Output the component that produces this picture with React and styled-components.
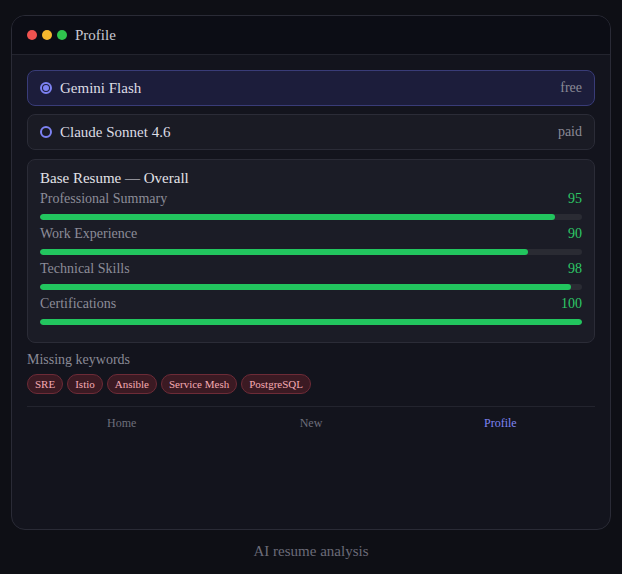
import React from 'react';
import styled, { createGlobalStyle } from 'styled-components';

const GlobalStyle = createGlobalStyle`
  html, body {
    margin: 0;
    padding: 0;
    background: #0e0f15;
    font-family: "Liberation Serif", "Times New Roman", serif;
  }
`;

const Page = styled.div`
  box-sizing: border-box;
  min-height: 100vh;
  display: flex;
  flex-direction: column;
  align-items: center;
  padding: 15px 11px 14px;
  gap: 12px;
`;

const Window = styled.div`
  box-sizing: border-box;
  width: 600px;
  flex: 1;
  display: flex;
  flex-direction: column;
  background: #13141d;
  border: 1px solid #2a2b36;
  border-radius: 14px;
  overflow: hidden;
`;

const TitleBar = styled.div`
  display: flex;
  align-items: center;
  gap: 5px;
  height: 38px;
  padding: 0 15px;
  background: #0c0d15;
  border-bottom: 1px solid #23242e;
`;

const Dot = styled.span`
  width: 10px;
  height: 10px;
  border-radius: 50%;
  background: ${p => p.color};
`;

const WindowTitle = styled.span`
  margin-left: 3px;
  font-size: 15px;
  color: #c9c9d2;
`;

const Body = styled.div`
  display: flex;
  flex-direction: column;
  padding: 15px 15px 0;
  gap: 8px;
`;

const Option = styled.div`
  box-sizing: border-box;
  height: 36px;
  display: flex;
  align-items: center;
  gap: 8px;
  padding: 0 12px;
  border-radius: 8px;
  background: ${p => (p.active ? '#1c1d3b' : '#1a1b24')};
  border: 1px solid ${p => (p.active ? '#393c78' : '#2b2c37')};
`;

const Radio = styled.span`
  box-sizing: border-box;
  width: 12px;
  height: 12px;
  border-radius: 50%;
  border: 2px solid #7d82f2;
  display: flex;
  align-items: center;
  justify-content: center;
  &::after {
    content: '';
    width: 6px;
    height: 6px;
    border-radius: 50%;
    background: ${p => (p.checked ? '#7d82f2' : 'transparent')};
  }
`;

const OptionName = styled.span`
  flex: 1;
  font-size: 15px;
  color: #dcdce4;
`;

const Tier = styled.span`
  font-size: 14px;
  color: #8a8a96;
`;

const ScoreCard = styled.div`
  box-sizing: border-box;
  padding: 9px 12px 17px;
  border-radius: 8px;
  background: #1b1c26;
  border: 1px solid #2b2c37;
  margin-top: 1px;
`;

const ScoreTitle = styled.div`
  font-size: 15px;
  color: #e2e2e8;
  line-height: 18px;
`;

const Row = styled.div`
  margin-top: ${p => (p.first ? '3px' : '5px')};
`;

const RowHead = styled.div`
  display: flex;
  justify-content: space-between;
  font-size: 14px;
  line-height: 18px;
  margin-bottom: 6px;
`;

const Label = styled.span`
  color: #8c8c98;
`;

const Value = styled.span`
  color: #2ec866;
`;

const Track = styled.div`
  height: 6px;
  border-radius: 3px;
  background: #2a2b33;
  overflow: hidden;
`;

const Fill = styled.div`
  height: 100%;
  border-radius: 3px;
  background: #22c55e;
`;

const Section = styled.div`
  font-size: 14px;
  color: #8a8a96;
  margin-top: 1px;
`;

const Tags = styled.div`
  display: flex;
  flex-wrap: wrap;
  gap: 4px;
  margin-top: -2px;
`;

const Tag = styled.span`
  box-sizing: border-box;
  height: 20px;
  display: inline-flex;
  align-items: center;
  padding: 0 7px;
  border-radius: 10px;
  font-size: 11px;
  color: #f5aab3;
  background: #3b1a23;
  border: 1px solid #6d2b37;
`;

const Nav = styled.nav`
  display: grid;
  grid-template-columns: repeat(3, 1fr);
  border-top: 1px solid #23242e;
  margin: 4px 0 0;
  padding-top: 9px;
`;

const NavItem = styled.span`
  text-align: center;
  font-size: 12px;
  color: ${p => (p.active ? '#7f84f3' : '#6d6e7b')};
`;

const Caption = styled.div`
  font-size: 15px;
  color: #6b6b78;
  line-height: 18px;
`;

const scores = [
  { name: 'Professional Summary', value: 95 },
  { name: 'Work Experience', value: 90 },
  { name: 'Technical Skills', value: 98 },
  { name: 'Certifications', value: 100 },
];

const keywords = ['SRE', 'Istio', 'Ansible', 'Service Mesh', 'PostgreSQL'];

const App = () => (
  <>
    <GlobalStyle />
    <Page>
      <Window>
        <TitleBar>
          <Dot color="#ef5350" />
          <Dot color="#f5b82e" />
          <Dot color="#2fc54d" />
          <WindowTitle>Profile</WindowTitle>
        </TitleBar>
        <Body>
          <Option active>
            <Radio checked />
            <OptionName>Gemini Flash</OptionName>
            <Tier>free</Tier>
          </Option>
          <Option>
            <Radio />
            <OptionName>Claude Sonnet 4.6</OptionName>
            <Tier>paid</Tier>
          </Option>
          <ScoreCard>
            <ScoreTitle>Base Resume — Overall</ScoreTitle>
            {scores.map((s, i) => (
              <Row key={s.name} first={i === 0}>
                <RowHead>
                  <Label>{s.name}</Label>
                  <Value>{s.value}</Value>
                </RowHead>
                <Track>
                  <Fill style={{ width: `${s.value}%` }} />
                </Track>
              </Row>
            ))}
          </ScoreCard>
          <Section>Missing keywords</Section>
          <Tags>
            {keywords.map(k => <Tag key={k}>{k}</Tag>)}
          </Tags>
          <Nav>
            <NavItem>Home</NavItem>
            <NavItem>New</NavItem>
            <NavItem active>Profile</NavItem>
          </Nav>
        </Body>
      </Window>
      <Caption>AI resume analysis</Caption>
    </Page>
  </>
);

export default App;
